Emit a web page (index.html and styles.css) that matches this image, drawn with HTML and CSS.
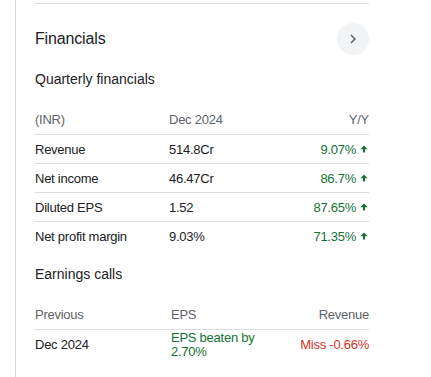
FILE: index.html
```html
<!DOCTYPE html>
<html>
<head>
<meta charset="utf-8">
<link rel="stylesheet" href="styles.css">
</head>
<body>
<div class="page">
  <div class="content">
    <div class="divider"></div>
    <div class="header">
      <div class="title">Financials</div>
      <div class="circle-btn">
        <svg width="18" height="18" viewBox="0 0 24 24"><path d="M10 6L8.59 7.41 13.17 12l-4.58 4.59L10 18l6-6z" fill="#5f6368"/></svg>
      </div>
    </div>
    <div class="subtitle sub-q">Quarterly financials</div>
    <div class="qtable">
      <div class="qrow head">
        <div class="c1">(INR)</div>
        <div class="c2">Dec 2024</div>
        <div class="c3">Y/Y</div>
      </div>
      <div class="qrow">
        <div class="c1">Revenue</div>
        <div class="c2">514.8Cr</div>
        <div class="c3 up">9.07%<svg class="arrow" width="8" height="8" viewBox="0 0 8 8"><path d="M4 0.5L7.6 4.2H5V7.6H3V4.2H0.4Z" fill="#137333"/></svg></div>
      </div>
      <div class="qrow">
        <div class="c1">Net income</div>
        <div class="c2">46.47Cr</div>
        <div class="c3 up">86.7%<svg class="arrow" width="8" height="8" viewBox="0 0 8 8"><path d="M4 0.5L7.6 4.2H5V7.6H3V4.2H0.4Z" fill="#137333"/></svg></div>
      </div>
      <div class="qrow">
        <div class="c1">Diluted EPS</div>
        <div class="c2">1.52</div>
        <div class="c3 up">87.65%<svg class="arrow" width="8" height="8" viewBox="0 0 8 8"><path d="M4 0.5L7.6 4.2H5V7.6H3V4.2H0.4Z" fill="#137333"/></svg></div>
      </div>
      <div class="qrow">
        <div class="c1">Net profit margin</div>
        <div class="c2">9.03%</div>
        <div class="c3 up">71.35%<svg class="arrow" width="8" height="8" viewBox="0 0 8 8"><path d="M4 0.5L7.6 4.2H5V7.6H3V4.2H0.4Z" fill="#137333"/></svg></div>
      </div>
    </div>
    <div class="subtitle sub-e">Earnings calls</div>
    <div class="etable">
      <div class="erow head">
        <div class="e1">Previous</div>
        <div class="e2">EPS</div>
        <div class="e3">Revenue</div>
      </div>
      <div class="erow data">
        <div class="e1">Dec 2024</div>
        <div class="e2 green">EPS beaten by 2.70%</div>
        <div class="e3 red">Miss -0.66%</div>
      </div>
    </div>
  </div>
</div>
</body>
</html>
```

FILE: styles.css
```css
* { box-sizing: border-box; }
html, body { margin: 0; padding: 0; background: #fff; }
body {
  font-family: "Liberation Sans", Arial, sans-serif;
  color: #202124;
}
.page {
  margin-left: 15px;
  border-left: 1px solid #dadce0;
  min-height: 377px;
  padding-left: 19px;
}
.content {
  width: 334px;
  padding-top: 3px;
}
.divider {
  height: 1px;
  background: #dadce0;
}
.header {
  display: flex;
  align-items: center;
  justify-content: space-between;
  margin-top: 19px;
  height: 32px;
}
.title {
  font-size: 16px;
  line-height: 20px;
  letter-spacing: -0.15px;
  color: #202124;
}
.circle-btn {
  width: 32px;
  height: 32px;
  border-radius: 50%;
  background: #f1f3f4;
  display: flex;
  align-items: center;
  justify-content: center;
}
.subtitle {
  font-size: 14px;
  line-height: 20px;
  color: #202124;
}
.sub-q { margin-top: 14px; }
.sub-e { margin-top: 14px; }
.qtable { margin-top: 15px; }
.qrow {
  display: grid;
  grid-template-columns: 134px 1fr auto;
  align-items: center;
  height: 29px;
  font-size: 13px;
  letter-spacing: -0.25px;
  border-top: 1px solid #dadce0;
}
.qrow.head {
  border-top: none;
  height: 30px;
  color: #5f6368;
}
.c3 {
  display: flex;
  align-items: center;
  justify-content: flex-end;
}
.up { color: #137333; }
.arrow { margin-left: 4px; margin-right: 1px; }
.etable { margin-top: 15px; }
.erow {
  display: grid;
  grid-template-columns: 136px 1fr auto;
  align-items: center;
  font-size: 13px;
  letter-spacing: -0.25px;
}
.erow.head {
  height: 30px;
  color: #5f6368;
}
.erow.data {
  border-top: 1px solid #dadce0;
  height: 30px;
  line-height: 13.5px;
}
.e2 { max-width: 110px; }
.e3 { text-align: right; }
.green { color: #137333; }
.red { color: #d93025; }
```
